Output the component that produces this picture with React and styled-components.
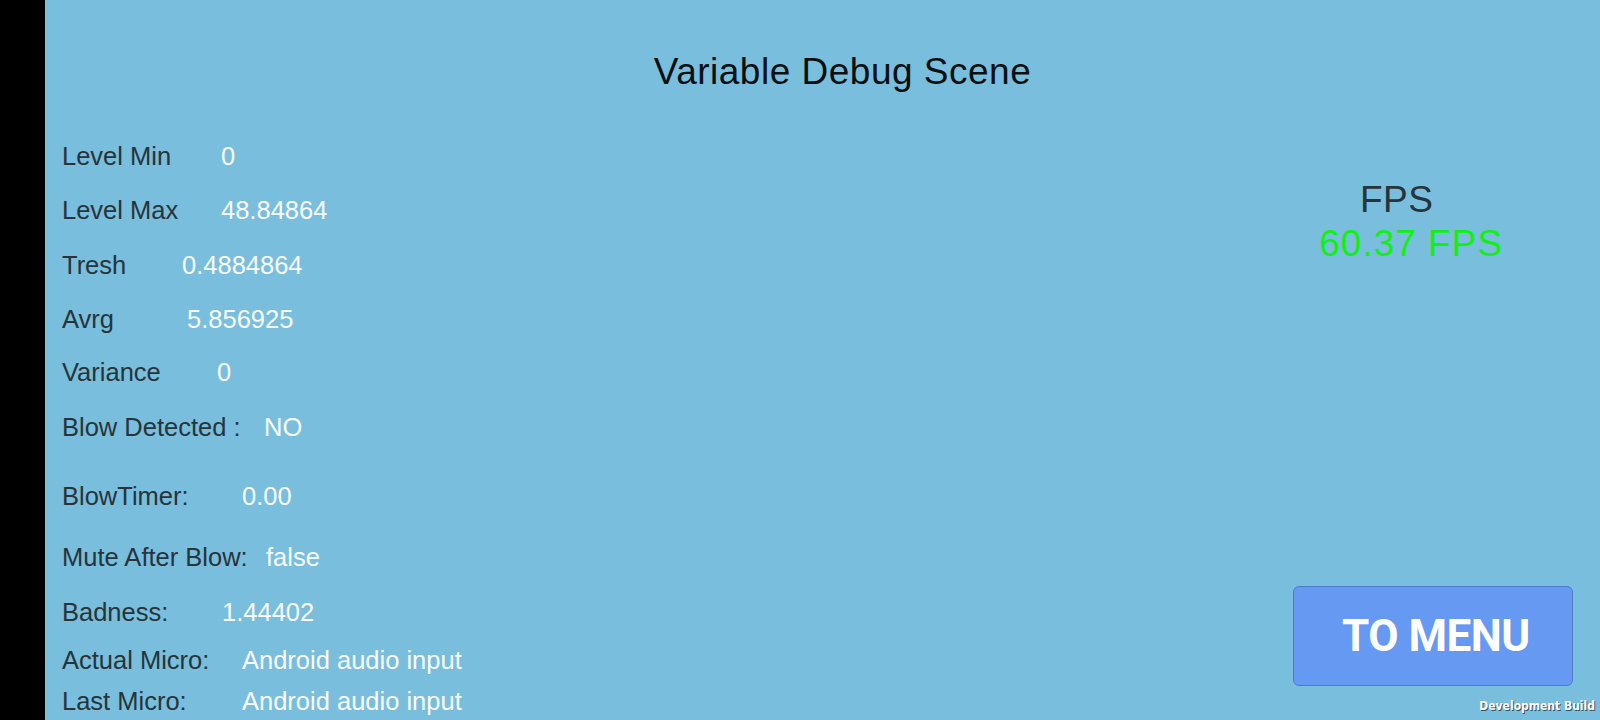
import React from 'react'
import styled, { createGlobalStyle } from 'styled-components'

const GlobalStyle = createGlobalStyle`
  html, body {
    margin: 0;
    padding: 0;
    background: #000;
  }
  body {
    font-family: "Liberation Sans", Arial, sans-serif;
  }
`

const rows = [
  { label: 'Level Min', value: '0', labelWidth: 159, space: 0 },
  { label: 'Level Max', value: '48.84864', labelWidth: 159, space: 24 },
  { label: 'Tresh', value: '0.4884864', labelWidth: 120, space: 24.5 },
  { label: 'Avrg', value: '5.856925', labelWidth: 125, space: 24.5 },
  { label: 'Variance', value: '0', labelWidth: 155, space: 23 },
  { label: 'Blow Detected :', value: 'NO', labelWidth: 202, space: 25 },
  { label: 'BlowTimer:', value: '0.00', labelWidth: 180, space: 39 },
  { label: 'Mute After Blow:', value: 'false', labelWidth: 204, space: 31 },
  { label: 'Badness:', value: '1.44402', labelWidth: 160, space: 25 },
  { label: 'Actual Micro:', value: 'Android audio input', labelWidth: 180, space: 17.5 },
  { label: 'Last Micro:', value: 'Android audio input', labelWidth: 180, space: 11.5 }
]

export default function App() {
  return (
    <React.Fragment>
      <GlobalStyle />
      <Screen>
        <SideBar />
        <Scene>
          <Title>Variable Debug Scene</Title>
          <Body>
            <VarList>
              {rows.map(row => (
                <Row key={row.label} space={row.space}>
                  <Label width={row.labelWidth}>{row.label}</Label>
                  <Value>{row.value}</Value>
                </Row>
              ))}
            </VarList>
            <RightPanel>
              <FpsBlock>
                <FpsLine indent={67}>FPS</FpsLine>
                <FpsLine indent={26} green>
                  60.37 FPS
                </FpsLine>
              </FpsBlock>
              <MenuButton>TO MENU</MenuButton>
              <DevBuild>Development Build</DevBuild>
            </RightPanel>
          </Body>
        </Scene>
      </Screen>
    </React.Fragment>
  )
}

const Screen = styled.div`
  display: flex;
  width: 100vw;
  height: 100vh;
  overflow: hidden;
  background: #79bedc;
`

const SideBar = styled.div`
  flex: 0 0 45px;
  background: #000;
`

const Scene = styled.div`
  flex: 1;
  display: flex;
  flex-direction: column;
  min-width: 0;
`

const Title = styled.h1`
  margin: 0;
  padding: 50px 0 0 40px;
  height: 42px;
  text-align: center;
  font-size: 37px;
  line-height: 44px;
  font-weight: normal;
  letter-spacing: 0.5px;
  color: #0a0f12;
`

const Body = styled.div`
  flex: 1;
  display: grid;
  grid-template-columns: 1fr 307px;
  min-height: 0;
`

const VarList = styled.div`
  display: flex;
  flex-direction: column;
  padding: 49px 0 0 17px;
`

const Row = styled.div`
  display: flex;
  margin-top: ${props => props.space}px;
  font-size: 25.5px;
  line-height: 30px;
  white-space: nowrap;
`

const Label = styled.span`
  flex: 0 0 ${props => props.width}px;
  color: #26343b;
`

const Value = styled.span`
  color: #fafdff;
`

const RightPanel = styled.div`
  display: flex;
  flex-direction: column;
  padding-top: 86px;
`

const FpsBlock = styled.div`
  display: flex;
  flex-direction: column;
`

const FpsLine = styled.div`
  padding-left: ${props => props.indent}px;
  font-size: 37px;
  line-height: 44px;
  letter-spacing: ${props => (props.green ? '1px' : '0.5px')};
  color: ${props => (props.green ? '#12f012' : '#26343b')};
`

const MenuButton = styled.button`
  margin-top: auto;
  width: 280px;
  height: 100px;
  padding: 0 0 0 6px;
  border: 1px solid #4d7bc9;
  border-radius: 6px;
  background: #6699f2;
  color: #fff;
  font-family: Roboto, "Liberation Sans", sans-serif;
  font-weight: bold;
  font-size: 44px;
  letter-spacing: -0.5px;
  cursor: pointer;
`

const DevBuild = styled.div`
  align-self: flex-end;
  margin: 13px 5px 7px 0;
  font-family: "DejaVu Sans Condensed", "DejaVu Sans", sans-serif;
  font-weight: bold;
  font-size: 12px;
  line-height: 14px;
  color: #fff;
  text-shadow: 1px 1px 0 rgba(0, 0, 0, 0.6);
`
